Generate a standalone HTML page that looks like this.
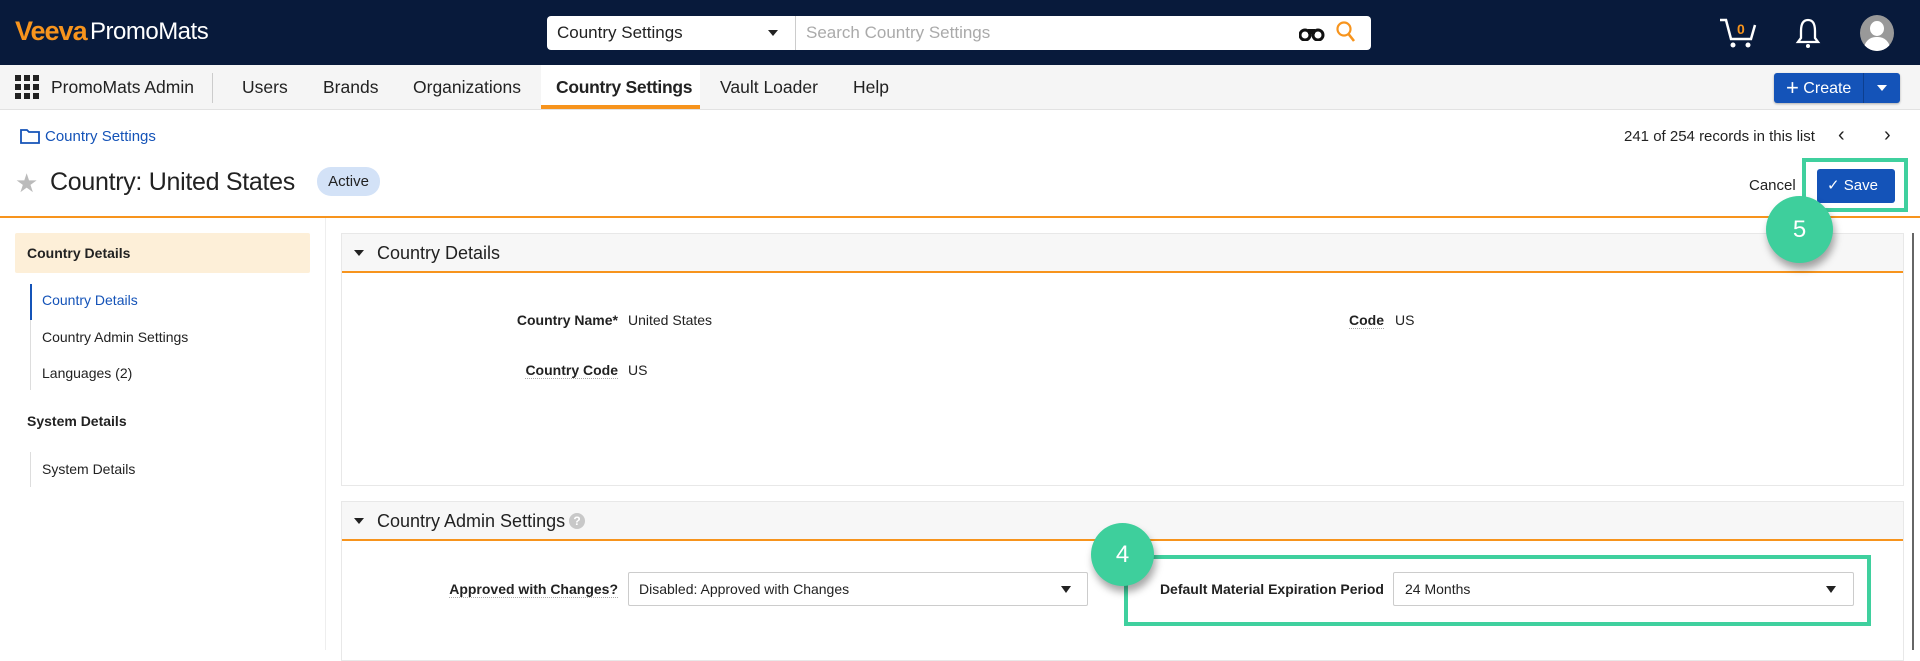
<!DOCTYPE html>
<html><head><meta charset="utf-8"><style>
*{box-sizing:border-box;margin:0;padding:0}
body{width:1920px;height:650px;overflow:hidden;background:#fff;font-family:"Liberation Sans",Arial,sans-serif;color:#222;position:relative}
.a{position:absolute;white-space:nowrap}
#top{left:0;top:0;width:1920px;height:65px;background:#081a3b}
#nav{left:0;top:65px;width:1920px;height:45px;background:#f5f5f5;border-bottom:1px solid #e2e2e2}
.nv{font-size:17.5px;color:#222;top:77px}
.lbl{font-size:14px;font-weight:bold;text-align:right}
.lbl span{border-bottom:1px dotted #aaa}
.val{font-size:14px}
.circ{border-radius:50%;background:#3ecf9c;color:#fff;font-size:24px;text-align:center;box-shadow:2px 6px 8px rgba(0,0,0,.35)}
</style></head><body>
<div class="a" id="top"></div>
<div class="a" style="left:15px;top:16px;font-size:27px;font-weight:bold;color:#f7941d;letter-spacing:-1px">Veeva</div>
<div class="a" style="left:90px;top:18px;font-size:24px;color:#fff;letter-spacing:-0.5px">PromoMats</div>
<div class="a" style="left:547px;top:16px;width:824px;height:34px;background:#fff;border-radius:4px"></div>
<div class="a" style="left:557px;top:23px;font-size:17px">Country Settings</div>
<div class="a" style="left:768px;top:30px;border-left:5px solid transparent;border-right:5px solid transparent;border-top:6px solid #222"></div>
<div class="a" style="left:795px;top:16px;width:1px;height:34px;background:#ccc"></div>
<div class="a" style="left:806px;top:23px;font-size:17px;color:#aaa">Search Country Settings</div>
<svg class="a" style="left:1299px;top:25px" width="26" height="16" viewBox="0 0 26 16"><circle cx="6" cy="10" r="5" fill="none" stroke="#111" stroke-width="3"/><circle cx="19" cy="10" r="5" fill="none" stroke="#111" stroke-width="3"/><rect x="9" y="4" width="7" height="5" fill="#111"/></svg>
<svg class="a" style="left:1335px;top:20px" width="22" height="24" viewBox="0 0 22 24"><circle cx="9" cy="9" r="6.5" fill="none" stroke="#f7941d" stroke-width="2.2"/><path d="M13.5 14 L19 21" stroke="#f7941d" stroke-width="2.6"/></svg>
<svg class="a" style="left:1718px;top:17px" width="40" height="32" viewBox="0 0 40 32"><path d="M2 3 L8 3 L13 22 L33 22 L37 8" fill="none" stroke="#fff" stroke-width="2.5"/><circle cx="15" cy="28" r="2.5" fill="#fff"/><circle cx="30" cy="28" r="2.5" fill="#fff"/><text x="19" y="17" font-size="14" font-weight="bold" fill="#f7941d" font-family="Liberation Sans">0</text></svg>
<svg class="a" style="left:1795px;top:17px" width="26" height="32" viewBox="0 0 26 32"><path d="M13 3 C7 3 6 9 6 14 L6 21 L3 25 L23 25 L20 21 L20 14 C20 9 19 3 13 3Z" fill="none" stroke="#fff" stroke-width="2.3"/><circle cx="13" cy="29" r="2" fill="#fff"/></svg>
<div class="a" style="left:1860px;top:15px;width:34px;height:36px;border-radius:50%;background:#999;overflow:hidden"><div class="a" style="left:10px;top:6px;width:14px;height:15px;border-radius:50%;background:#fff"></div><div class="a" style="left:4px;top:22px;width:26px;height:20px;border-radius:12px 12px 0 0;background:#fff"></div></div>

<div class="a" id="nav"></div>
<svg class="a" style="left:15px;top:75px" width="25" height="25" viewBox="0 0 25 25"><g fill="#222"><rect x="0" y="0" width="6" height="6"/><rect x="9" y="0" width="6" height="6"/><rect x="18" y="0" width="6" height="6"/><rect x="0" y="9" width="6" height="6"/><rect x="9" y="9" width="6" height="6"/><rect x="18" y="9" width="6" height="6"/><rect x="0" y="18" width="6" height="6"/><rect x="9" y="18" width="6" height="6"/><rect x="18" y="18" width="6" height="6"/></g></svg>
<div class="a nv" style="left:51px">PromoMats Admin</div>
<div class="a" style="left:212px;top:73px;width:1px;height:30px;background:#ccc"></div>
<div class="a nv" style="left:242px">Users</div>
<div class="a nv" style="left:323px">Brands</div>
<div class="a nv" style="left:413px">Organizations</div>
<div class="a" style="left:541px;top:65px;width:159px;height:44px;background:#fff;border-bottom:4px solid #f7941d"></div>
<div class="a nv" style="left:556px;font-weight:bold;letter-spacing:-0.3px">Country Settings</div>
<div class="a nv" style="left:720px">Vault Loader</div>
<div class="a nv" style="left:853px">Help</div>
<div class="a" style="left:1774px;top:73px;width:126px;height:30px;background:#1453b8;border-radius:3px;box-shadow:0 1px 2px rgba(0,0,0,.3)"></div>
<div class="a" style="left:1786px;top:79px;font-size:16px;color:#fff"><span style="font-size:22px;line-height:18px;vertical-align:-2px">+</span> Create</div>
<div class="a" style="left:1863px;top:73px;width:1px;height:30px;background:#0d3f8f"></div>
<div class="a" style="left:1877px;top:85px;border-left:5px solid transparent;border-right:5px solid transparent;border-top:6px solid #fff"></div>

<svg class="a" style="left:20px;top:128px" width="20" height="16" viewBox="0 0 20 16"><path d="M1 2 L7 2 L9 4 L19 4 L19 15 L1 15Z" fill="none" stroke="#1453b8" stroke-width="1.8"/></svg>
<div class="a" style="left:45px;top:128px;font-size:15px;color:#1453b8">Country Settings</div>
<div class="a" style="left:1624px;top:128px;font-size:15px">241 of 254 records in this list</div>
<div class="a" style="left:1838px;top:124px;font-size:20px">&#8249;</div>
<div class="a" style="left:1884px;top:124px;font-size:20px">&#8250;</div>
<div class="a" style="left:15px;top:168px;font-size:26px;color:#bbb">&#9733;</div>
<div class="a" style="left:50px;top:168px;font-size:25px;letter-spacing:-0.3px">Country: United States</div>
<div class="a" style="left:317px;top:167px;width:63px;height:29px;border-radius:14px;background:#d3e2f7;font-size:15px;text-align:center;line-height:29px">Active</div>
<div class="a" style="left:1749px;top:177px;font-size:15px">Cancel</div>
<div class="a" style="left:1802px;top:158px;width:106px;height:54px;border:4px solid #3fd09e"></div>
<div class="a" style="left:1817px;top:169px;width:78px;height:34px;background:#1453b8;border-radius:3px;color:#fff;font-size:15px;line-height:34px;padding-left:10px">&#10003; Save</div>
<div class="a" style="left:0;top:216px;width:1920px;height:2px;background:#f7941d"></div>

<div class="a" style="left:325px;top:218px;width:1px;height:432px;background:#eee"></div>
<div class="a" style="left:15px;top:233px;width:295px;height:40px;background:#fdefd8;border-radius:2px"></div>
<div class="a" style="left:27px;top:245px;font-size:14px;font-weight:bold">Country Details</div>
<div class="a" style="left:30px;top:284px;width:2px;height:36px;background:#1453b8"></div>
<div class="a" style="left:30px;top:320px;width:1px;height:70px;background:#ddd"></div>
<div class="a" style="left:42px;top:292px;font-size:14px;color:#1453b8">Country Details</div>
<div class="a" style="left:42px;top:329px;font-size:14px">Country Admin Settings</div>
<div class="a" style="left:42px;top:365px;font-size:14px">Languages (2)</div>
<div class="a" style="left:27px;top:413px;font-size:14px;font-weight:bold">System Details</div>
<div class="a" style="left:30px;top:452px;width:1px;height:35px;background:#ddd"></div>
<div class="a" style="left:42px;top:461px;font-size:14px">System Details</div>

<div class="a" style="left:341px;top:233px;width:1563px;height:253px;border:1px solid #e8e8e8"></div>
<div class="a" style="left:342px;top:234px;width:1561px;height:39px;background:#f7f7f7;border-bottom:2px solid #f7941d"></div>
<div class="a" style="left:354px;top:250px;border-left:5px solid transparent;border-right:5px solid transparent;border-top:6px solid #222"></div>
<div class="a" style="left:377px;top:243px;font-size:18px">Country Details</div>
<div class="a lbl" style="left:400px;width:218px;top:312px"><span style="border:none">Country Name*</span></div>
<div class="a val" style="left:628px;top:312px">United States</div>
<div class="a lbl" style="left:400px;width:218px;top:362px"><span>Country Code</span></div>
<div class="a val" style="left:628px;top:362px">US</div>
<div class="a lbl" style="left:1300px;width:84px;top:312px"><span>Code</span></div>
<div class="a val" style="left:1395px;top:312px">US</div>

<div class="a" style="left:341px;top:501px;width:1563px;height:160px;border:1px solid #e8e8e8"></div>
<div class="a" style="left:342px;top:502px;width:1561px;height:39px;background:#f7f7f7;border-bottom:2px solid #f7941d"></div>
<div class="a" style="left:354px;top:518px;border-left:5px solid transparent;border-right:5px solid transparent;border-top:6px solid #222"></div>
<div class="a" style="left:377px;top:511px;font-size:18px">Country Admin Settings</div>
<div class="a" style="left:569px;top:513px;width:16px;height:16px;border-radius:50%;background:#c8c8c8;color:#fff;font-size:12px;font-weight:bold;text-align:center;line-height:16px">?</div>
<div class="a lbl" style="left:400px;width:218px;top:581px"><span>Approved with Changes?</span></div>
<div class="a" style="left:628px;top:572px;width:460px;height:34px;border:1px solid #ccc;border-radius:2px"></div>
<div class="a val" style="left:639px;top:581px">Disabled: Approved with Changes</div>
<div class="a" style="left:1061px;top:586px;border-left:5px solid transparent;border-right:5px solid transparent;border-top:7px solid #222"></div>
<div class="a" style="left:1124px;top:555px;width:747px;height:71px;border:4px solid #3fd09e"></div>
<div class="a lbl" style="left:1140px;width:244px;top:581px">Default Material Expiration Period</div>
<div class="a" style="left:1393px;top:572px;width:461px;height:34px;border:1px solid #ccc;border-radius:2px"></div>
<div class="a val" style="left:1405px;top:581px">24 Months</div>
<div class="a" style="left:1826px;top:586px;border-left:5px solid transparent;border-right:5px solid transparent;border-top:7px solid #222"></div>

<div class="a" style="left:1912px;top:233px;width:2px;height:417px;background:#666"></div>
<div class="a circ" style="left:1091px;top:523px;width:63px;height:63px;line-height:63px">4</div>
<div class="a circ" style="left:1766px;top:196px;width:67px;height:67px;line-height:67px">5</div>
</body></html>
